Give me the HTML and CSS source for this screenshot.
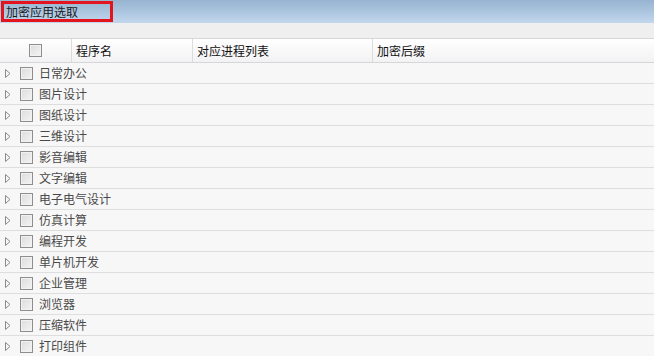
FILE: index.html
```html
<!DOCTYPE html>
<html lang="zh-CN">
<head>
    <meta charset="UTF-8">
    <title>加密应用选取</title>
    <link rel="stylesheet" href="styles.css">
</head>
<body>
    <div class="title-bar">
        <span class="title-box">加密应用选取</span>
    </div>
    <div class="toolbar"></div>

    <!-- column header -->
    <div class="grid-header">
        <div class="col col-check"><span class="check"></span></div>
        <div class="col col-name">程序名</div>
        <div class="col col-proc">对应进程列表</div>
        <div class="col col-ext">加密后缀</div>
    </div>

    <!-- tree rows -->
    <div class="tree">
        <div class="node"><svg class="arrow" viewBox="0 0 6 9"><path d="M0.5 0.5 L5 4.5 L0.5 8.5 Z"/></svg><span class="check"></span><span class="label">日常办公</span></div>
        <div class="node"><svg class="arrow" viewBox="0 0 6 9"><path d="M0.5 0.5 L5 4.5 L0.5 8.5 Z"/></svg><span class="check"></span><span class="label">图片设计</span></div>
        <div class="node"><svg class="arrow" viewBox="0 0 6 9"><path d="M0.5 0.5 L5 4.5 L0.5 8.5 Z"/></svg><span class="check"></span><span class="label">图纸设计</span></div>
        <div class="node"><svg class="arrow" viewBox="0 0 6 9"><path d="M0.5 0.5 L5 4.5 L0.5 8.5 Z"/></svg><span class="check"></span><span class="label">三维设计</span></div>
        <div class="node"><svg class="arrow" viewBox="0 0 6 9"><path d="M0.5 0.5 L5 4.5 L0.5 8.5 Z"/></svg><span class="check"></span><span class="label">影音编辑</span></div>
        <div class="node"><svg class="arrow" viewBox="0 0 6 9"><path d="M0.5 0.5 L5 4.5 L0.5 8.5 Z"/></svg><span class="check"></span><span class="label">文字编辑</span></div>
        <div class="node"><svg class="arrow" viewBox="0 0 6 9"><path d="M0.5 0.5 L5 4.5 L0.5 8.5 Z"/></svg><span class="check"></span><span class="label">电子电气设计</span></div>
        <div class="node"><svg class="arrow" viewBox="0 0 6 9"><path d="M0.5 0.5 L5 4.5 L0.5 8.5 Z"/></svg><span class="check"></span><span class="label">仿真计算</span></div>
        <div class="node"><svg class="arrow" viewBox="0 0 6 9"><path d="M0.5 0.5 L5 4.5 L0.5 8.5 Z"/></svg><span class="check"></span><span class="label">编程开发</span></div>
        <div class="node"><svg class="arrow" viewBox="0 0 6 9"><path d="M0.5 0.5 L5 4.5 L0.5 8.5 Z"/></svg><span class="check"></span><span class="label">单片机开发</span></div>
        <div class="node"><svg class="arrow" viewBox="0 0 6 9"><path d="M0.5 0.5 L5 4.5 L0.5 8.5 Z"/></svg><span class="check"></span><span class="label">企业管理</span></div>
        <div class="node"><svg class="arrow" viewBox="0 0 6 9"><path d="M0.5 0.5 L5 4.5 L0.5 8.5 Z"/></svg><span class="check"></span><span class="label">浏览器</span></div>
        <div class="node"><svg class="arrow" viewBox="0 0 6 9"><path d="M0.5 0.5 L5 4.5 L0.5 8.5 Z"/></svg><span class="check"></span><span class="label">压缩软件</span></div>
        <div class="node"><svg class="arrow" viewBox="0 0 6 9"><path d="M0.5 0.5 L5 4.5 L0.5 8.5 Z"/></svg><span class="check"></span><span class="label">打印组件</span></div>
    </div>
</body>
</html>
```

FILE: styles.css
```css
body {
    margin: 0;
    background-color: #f7f7f7;
    font-family: "Noto Sans CJK SC", "Liberation Sans", sans-serif;
    font-size: 12px;
    color: #333;
    overflow: hidden;
}

.title-bar {
    height: 23px;
    padding: 1px 0 0 1px;
    box-sizing: border-box;
    background: linear-gradient(to bottom, #97b3d0, #c1d7ed);
}

.title-box {
    display: inline-block;
    width: 112px;
    height: 21px;
    line-height: 15px;
    padding: 0 0 0 2px;
    border: 3px solid #e3141d;
    box-sizing: border-box;
    color: #1a1a1a;
}

.toolbar {
    height: 15px;
    background-color: #efefef;
}

.grid-header {
    display: flex;
    height: 25px;
    border-top: 1px solid #d6d6d6;
    border-bottom: 1px solid #d6d6d6;
    box-sizing: border-box;
    background: linear-gradient(to bottom, #ffffff, #f2f2f4);
    color: #111;
}

.col {
    display: flex;
    align-items: center;
    padding-left: 4px;
    border-left: 1px solid #dcdcdc;
    box-sizing: border-box;
}

.col-check {
    width: 71px;
    padding-left: 29px;
    border-left: none;
}

.col-name {
    width: 121px;
}

.col-proc {
    width: 180px;
}

.col-ext {
    flex: 1;
}

.check {
    display: inline-block;
    width: 13px;
    height: 13px;
    border: 1px solid #8e8e8e;
    box-sizing: border-box;
    background: linear-gradient(to bottom right, #dcdcdc, #f4f4f4);
    box-shadow: inset 0 0 0 1px #f2f2f2;
}

.node {
    display: flex;
    align-items: center;
    height: 21px;
    border-bottom: 1px solid #dedede;
    box-sizing: border-box;
    padding-left: 5px;
    color: #4a4a4a;
}

.arrow {
    width: 6px;
    height: 9px;
    margin-right: 9px;
    fill: none;
    stroke: #8a8a8a;
    stroke-width: 1;
}

.label {
    margin-left: 6px;
    line-height: 20px;
}
```
